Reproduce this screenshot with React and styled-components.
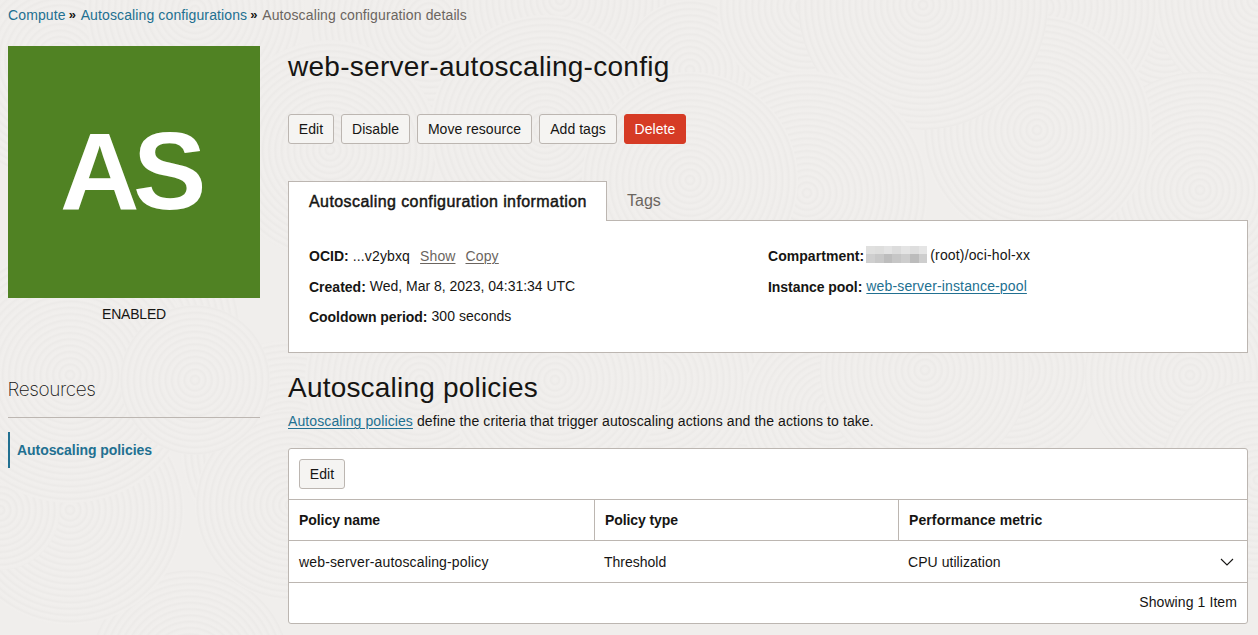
import React from "react";
import styled, { createGlobalStyle } from "styled-components";

const GlobalStyle = createGlobalStyle`
  * { box-sizing: border-box; }
  body {
    margin: 0;
    background: #f0eeec;
    color: #161513;
    font-family: "Liberation Sans", Arial, sans-serif;
    font-size: 14px;
    line-height: 20px;
  }
  h1, h2, h3, p { margin: 0; font-weight: 400; }
`;

const Page = styled.div`
  position: relative;
  height: 635px;
  padding: 0 10px 0 8px;
  overflow: hidden;
  isolation: isolate;
`;

const Texture = styled.svg`
  position: absolute;
  inset: 0;
  z-index: -1;
`;

const Breadcrumbs = styled.nav`
  display: flex;
  height: 46px;
  padding-top: 5px;
`;

const Crumb = styled.span`
  color: ${(p) => (p.$link ? "#227091" : "#6b6560")};
  letter-spacing: 0.12px;
`;

const Separator = styled.span`
  width: 15px;
  padding-left: 3px;
  font-size: 13px;
  font-weight: 700;
`;

const Columns = styled.div`
  display: grid;
  grid-template-columns: 252px 960px;
  column-gap: 28px;
`;

const Tile = styled.div`
  display: flex;
  justify-content: center;
  height: 252px;
  padding-right: 8px;
  background: #508223;
  color: #fff;
  font-size: 110px;
  font-weight: 700;
  line-height: 249px;
  letter-spacing: -6.5px;
`;

const Status = styled.div`
  margin-top: 6px;
  text-align: center;
  letter-spacing: -0.2px;
`;

const ResourcesTitle = styled.h3`
  height: 54px;
  margin-top: 40px;
  padding-top: 13px;
  border-bottom: 1px solid #bcb6b1;
  color: #161513;
  font-family: Inter, "Liberation Sans", sans-serif;
  font-size: 19px;
  font-weight: 200;
  letter-spacing: -0.4px;
  line-height: 25px;
  text-indent: -0.5px;
`;

const ResourceLink = styled.a`
  display: block;
  height: 36px;
  margin-top: 14px;
  padding-left: 7px;
  border-left: 2px solid #227091;
  color: #227091;
  font-weight: 700;
  letter-spacing: -0.06px;
  line-height: 36px;
`;

const Title = styled.h1`
  height: 68px;
  padding-top: 4px;
  font-size: 28px;
  letter-spacing: 0.28px;
  line-height: 34px;
`;

const Toolbar = styled.div`
  display: flex;
  gap: 7px;
`;

const Button = styled.button`
  width: ${(p) => p.$width}px;
  height: 30px;
  padding: 0;
  border: 1px solid ${(p) => (p.$danger ? "#d63b25" : "#bcb6b1")};
  border-radius: 3px;
  background: ${(p) => (p.$danger ? "#d63b25" : "#f5f4f2")};
  color: ${(p) => (p.$danger ? "#fff" : "#161513")};
  font: inherit;
  letter-spacing: 0.05px;
  white-space: nowrap;
`;

const Tabs = styled.div`
  position: relative;
  display: flex;
  height: 40px;
  margin: 37px 0 -1px;
`;

const Tab = styled.div`
  height: 40px;
  padding: 0 20px;
  color: #6b6560;
  font-size: 16px;
  line-height: 39px;
  white-space: nowrap;
  ${(p) => p.$active && `
    width: 319px;
    color: #161513;
    background: #fff;
    border: 1px solid #bcb6b1;
    border-bottom: 0;
    letter-spacing: 0.42px;
    -webkit-text-stroke: 0.45px #161513;
  `}
`;

const InfoPanel = styled.div`
  display: grid;
  grid-template-columns: 459px 1fr;
  height: 133px;
  padding: 20px;
  border: 1px solid #bcb6b1;
  background: #fff;
`;

const Fact = styled.div`
  display: flex;
  height: 30px;
  line-height: 30px;
  white-space: pre;
`;

const Label = styled.b`
  margin-right: 4px;
  padding-top: ${(p) => (p.$first ? 0 : 1)}px;
  letter-spacing: ${(p) => p.$track || 0}px;
`;

const Value = styled.span`
  letter-spacing: ${(p) => p.$track || 0}px;
  line-height: ${(p) => (p.$raised ? 28 : 30)}px;
`;

const Link = styled.a`
  margin-left: ${(p) => p.$gap || 0}px;
  color: ${(p) => (p.$muted ? "#6b6560" : "#227091")};
  letter-spacing: ${(p) => p.$track || 0}px;
  text-decoration: underline;
  text-underline-offset: 2px;
  text-decoration-thickness: 1px;
`;

const Redacted = styled.span`
  display: grid;
  grid-template-columns: repeat(7, 1fr);
  grid-template-rows: 8px 9px;
  width: 61px;
  margin: 5px 3px 0 -2px;
`;

const Block = styled.i`
  background: ${(p) => p.$tone};
`;

const SectionTitle = styled.h2`
  height: 40px;
  margin-top: 18px;
  font-size: 28px;
  letter-spacing: 0.2px;
  line-height: 34px;
`;

const Description = styled.p`
  letter-spacing: 0.09px;
`;

const Card = styled.section`
  height: 176px;
  margin-top: 17px;
  border: 1px solid #bcb6b1;
  border-radius: 3px;
  background: #fff;
`;

const CardToolbar = styled.div`
  height: 50px;
  padding: 10px;
`;

const Row = styled.div`
  display: grid;
  grid-template-columns: 305px 304px 1fr;
  height: ${(p) => (p.$head ? 41 : 42)}px;
  border-top: 1px solid #bcb6b1;
  font-weight: ${(p) => (p.$head ? 700 : 400)};
  line-height: ${(p) => (p.$head ? 40 : 42)}px;
`;

const Cell = styled.div`
  display: flex;
  align-items: center;
  justify-content: space-between;
  padding: 0 13px 0 10px;
  border-left: ${(p) => (p.$divided ? "1px solid #bcb6b1" : "0")};
  letter-spacing: ${(p) => p.$track || 0}px;
`;

const Footer = styled.div`
  height: 41px;
  padding-right: 10px;
  border-top: 1px solid #bcb6b1;
  letter-spacing: 0.09px;
  line-height: 39px;
  text-align: right;
`;

const SWIRLS = [
  [60, 60, 120], [195, 10, 110], [430, 20, 120], [560, 0, 110], [690, 70, 70],
  [330, 150, 110], [545, 130, 115], [1165, 30, 95], [1258, 0, 105],
  [1200, 190, 118], [1043, 7, 115], [807, 7, 90], [1037, 130, 115],
  [923, 5, 125], [807, 193, 122], [690, 180, 108],
  [120, 330, 120], [290, 450, 110], [420, 380, 115], [740, 500, 120],
  [650, 380, 110], [555, 380, 110], [830, 410, 90], [1010, 370, 95],
  [1190, 375, 105], [925, 370, 105], [1258, 480, 100], [190, 670, 100],
  [290, 505, 95], [70, 510, 115], [0, 510, 60], [70, 375, 128],
  [195, 380, 75],
];

const TONES = [
  "#e0e0df", "#dededd", "#e3e3e3", "#dcdcdc", "#e4e4e4", "#dedede", "#e5e5e5",
  "#cfcfcf", "#c8c8c8", "#bdbdbd", "#c6c6c6", "#cdcdcd", "#bcbcbc", "#cecece",
];

function Background() {
  return (
    <Texture width="1258" height="635" aria-hidden="true">
      <defs>
        {SWIRLS.map(([x, y], i) => (
          <radialGradient key={i} id={`ring${i}`} gradientUnits="userSpaceOnUse"
            cx={x} cy={y} r="6.3" spreadMethod="repeat">
            <stop offset="0" stopColor="#f1efed" />
            <stop offset="0.35" stopColor="#f0eeec" />
            <stop offset="0.7" stopColor="#eceae8" />
            <stop offset="1" stopColor="#f1efed" />
          </radialGradient>
        ))}
      </defs>
      {SWIRLS.map(([x, y, r], i) => (
        <circle key={i} cx={x} cy={y} r={r} fill={`url(#ring${i})`} />
      ))}
    </Texture>
  );
}

export default function App() {
  return (
    <Page>
      <GlobalStyle />
      <Background />
      <Breadcrumbs>
        <Crumb $link>Compute</Crumb>
        <Separator>»</Separator>
        <Crumb $link>Autoscaling configurations</Crumb>
        <Separator>»</Separator>
        <Crumb>Autoscaling configuration details</Crumb>
      </Breadcrumbs>
      <Columns>
        <aside>
          <Tile>AS</Tile>
          <Status>ENABLED</Status>
          <ResourcesTitle>Resources</ResourcesTitle>
          <ResourceLink>Autoscaling policies</ResourceLink>
        </aside>
        <main>
          <Title>web-server-autoscaling-config</Title>
          <Toolbar>
            <Button $width={46}>Edit</Button>
            <Button $width={69}>Disable</Button>
            <Button $width={115}>Move resource</Button>
            <Button $width={78}>Add tags</Button>
            <Button $width={62} $danger>Delete</Button>
          </Toolbar>
          <Tabs>
            <Tab $active>Autoscaling configuration information</Tab>
            <Tab>Tags</Tab>
          </Tabs>
          <InfoPanel>
            <div>
              <Fact>
                <Label $first>OCID:</Label>
                <Value $track={0.15}>...v2ybxq</Value>
                <Link $muted $gap={10} $track={0.1}>Show</Link>
                <Link $muted $gap={10} $track={0.15}>Copy</Link>
              </Fact>
              <Fact>
                <Label>Created:</Label>
                <Value $track={-0.02}>Wed, Mar 8, 2023, 04:31:34 UTC</Value>
              </Fact>
              <Fact>
                <Label $track={-0.03}>Cooldown period:</Label>
                <Value $track={0.04}>300 seconds</Value>
              </Fact>
            </div>
            <div>
              <Fact>
                <Label $first $track={0.05}>Compartment:</Label>
                <Redacted>{TONES.map((tone, i) => <Block key={i} $tone={tone} />)}</Redacted>
                <Value $raised $track={0.15}>(root)/oci-hol-xx</Value>
              </Fact>
              <Fact>
                <Label $track={-0.04}>Instance pool:</Label>
                <Link $track={0.14}>web-server-instance-pool</Link>
              </Fact>
            </div>
          </InfoPanel>
          <SectionTitle>Autoscaling policies</SectionTitle>
          <Description>
            <Link $track={0.1}>Autoscaling policies</Link> define the criteria that trigger autoscaling actions and the actions to take.
          </Description>
          <Card>
            <CardToolbar><Button $width={46}>Edit</Button></CardToolbar>
            <Row $head>
              <Cell $track={-0.06}>Policy name</Cell>
              <Cell $divided $track={-0.1}>Policy type</Cell>
              <Cell $divided $track={0.1}>Performance metric</Cell>
            </Row>
            <Row>
              <Cell $track={0.15}>web-server-autoscaling-policy</Cell>
              <Cell>Threshold</Cell>
              <Cell $track={0.05}>
                CPU utilization
                <svg width="14" height="8" viewBox="0 0 14 8" fill="none" stroke="#161513" strokeWidth="1.1">
                  <path d="M1 1l6 6 6-6" />
                </svg>
              </Cell>
            </Row>
            <Footer>Showing 1 Item</Footer>
          </Card>
        </main>
      </Columns>
    </Page>
  );
}
